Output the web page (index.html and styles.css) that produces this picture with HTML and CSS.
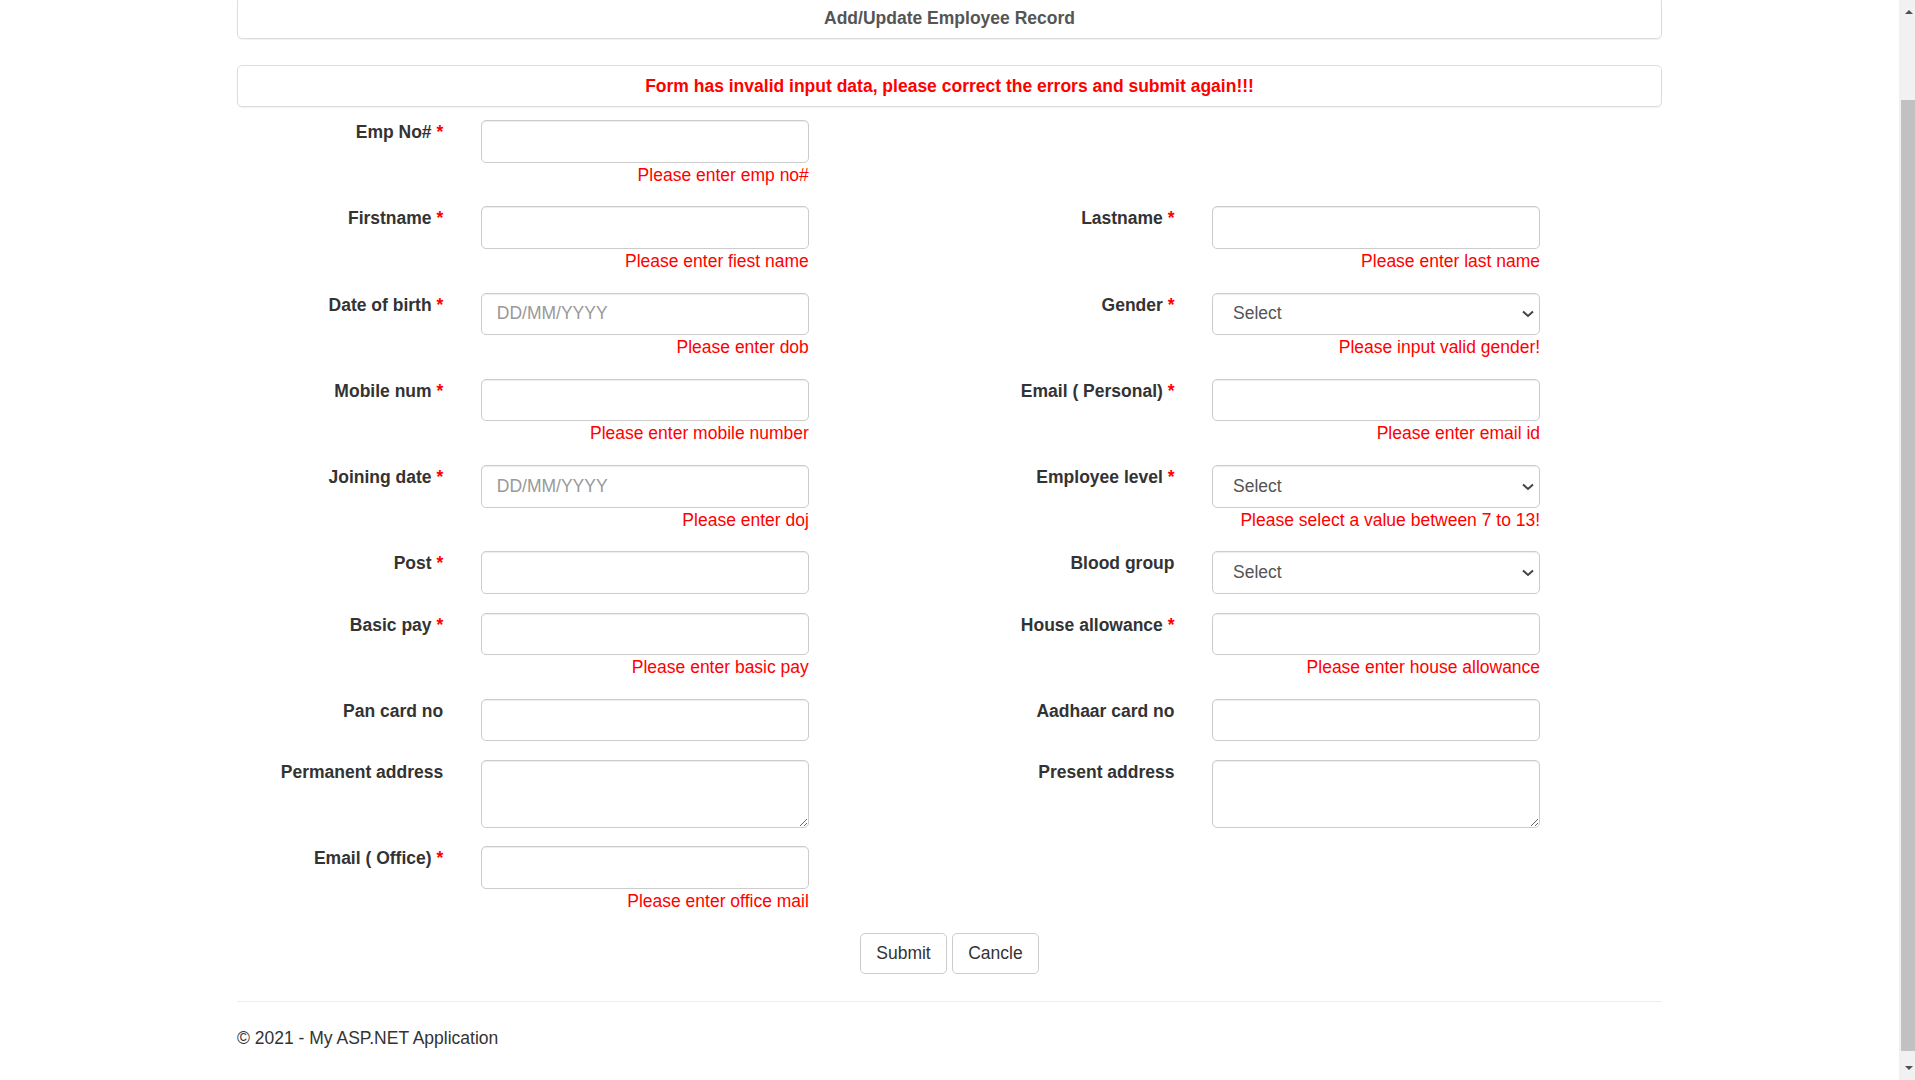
FILE: index.html
```html
<!DOCTYPE html>
<html lang="en">
<head>
<meta charset="utf-8">
<title>Add/Update Employee Record</title>
<link rel="stylesheet" href="styles.css">
</head>
<body>
<div class="page">
  <div class="container">
    <div class="panel panel-title">Add/Update Employee Record</div>
    <div class="panel panel-alert">Form has invalid input data, please correct the errors and submit again!!!</div>

    <form class="form-grid">
      <div class="field">
        <label class="lbl">Emp No# <span class="req">*</span></label>
        <div class="ctl"><input class="inp" type="text"><span class="err">Please enter emp no#</span></div>
      </div>
      <div class="field"></div>

      <div class="field">
        <label class="lbl">Firstname <span class="req">*</span></label>
        <div class="ctl"><input class="inp" type="text"><span class="err">Please enter fiest name</span></div>
      </div>
      <div class="field">
        <label class="lbl">Lastname <span class="req">*</span></label>
        <div class="ctl"><input class="inp" type="text"><span class="err">Please enter last name</span></div>
      </div>

      <div class="field">
        <label class="lbl">Date of birth <span class="req">*</span></label>
        <div class="ctl"><input class="inp" type="text" placeholder="DD/MM/YYYY"><span class="err">Please enter dob</span></div>
      </div>
      <div class="field">
        <label class="lbl">Gender <span class="req">*</span></label>
        <div class="ctl"><div class="sel-wrap"><select class="inp sel"><option>Select</option></select><svg class="chev" width="12" height="8" viewBox="0 0 12 8"><path d="M1 1.5 L6 6 L11 1.5" fill="none" stroke="#444" stroke-width="2"/></svg></div><span class="err">Please input valid gender!</span></div>
      </div>

      <div class="field">
        <label class="lbl">Mobile num <span class="req">*</span></label>
        <div class="ctl"><input class="inp" type="text"><span class="err">Please enter mobile number</span></div>
      </div>
      <div class="field">
        <label class="lbl">Email ( Personal) <span class="req">*</span></label>
        <div class="ctl"><input class="inp" type="text"><span class="err">Please enter email id</span></div>
      </div>

      <div class="field">
        <label class="lbl">Joining date <span class="req">*</span></label>
        <div class="ctl"><input class="inp" type="text" placeholder="DD/MM/YYYY"><span class="err">Please enter doj</span></div>
      </div>
      <div class="field">
        <label class="lbl">Employee level <span class="req">*</span></label>
        <div class="ctl"><div class="sel-wrap"><select class="inp sel"><option>Select</option></select><svg class="chev" width="12" height="8" viewBox="0 0 12 8"><path d="M1 1.5 L6 6 L11 1.5" fill="none" stroke="#444" stroke-width="2"/></svg></div><span class="err">Please select a value between 7 to 13!</span></div>
      </div>

      <div class="field">
        <label class="lbl">Post <span class="req">*</span></label>
        <div class="ctl"><input class="inp" type="text"></div>
      </div>
      <div class="field">
        <label class="lbl">Blood group</label>
        <div class="ctl"><div class="sel-wrap"><select class="inp sel"><option>Select</option></select><svg class="chev" width="12" height="8" viewBox="0 0 12 8"><path d="M1 1.5 L6 6 L11 1.5" fill="none" stroke="#444" stroke-width="2"/></svg></div></div>
      </div>

      <div class="field">
        <label class="lbl">Basic pay <span class="req">*</span></label>
        <div class="ctl"><input class="inp" type="text"><span class="err">Please enter basic pay</span></div>
      </div>
      <div class="field">
        <label class="lbl">House allowance <span class="req">*</span></label>
        <div class="ctl"><input class="inp" type="text"><span class="err">Please enter house allowance</span></div>
      </div>

      <div class="field">
        <label class="lbl">Pan card no</label>
        <div class="ctl"><input class="inp" type="text"></div>
      </div>
      <div class="field">
        <label class="lbl">Aadhaar card no</label>
        <div class="ctl"><input class="inp" type="text"></div>
      </div>

      <div class="field">
        <label class="lbl">Permanent address</label>
        <div class="ctl"><textarea class="inp ta" rows="2"></textarea></div>
      </div>
      <div class="field">
        <label class="lbl">Present address</label>
        <div class="ctl"><textarea class="inp ta" rows="2"></textarea></div>
      </div>

      <div class="field">
        <label class="lbl">Email ( Office) <span class="req">*</span></label>
        <div class="ctl"><input class="inp" type="text"><span class="err">Please enter office mail</span></div>
      </div>
      <div class="field"></div>
    </form>

    <div class="actions">
      <button class="btn" type="button">Submit</button>
      <button class="btn" type="button">Cancle</button>
    </div>

    <hr class="rule">
    <footer class="footer">&copy; 2021 - My ASP.NET Application</footer>
  </div>
</div>

<div class="scrollbar">
  <div class="sb-up"></div>
  <div class="sb-thumb"></div>
  <div class="sb-down"></div>
</div>
</body>
</html>
```
FILE: styles.css
```css
html, body {
  margin: 0;
  padding: 0;
  overflow: hidden;
  background: #fff;
}
body {
  font-family: "Liberation Sans", Arial, Helvetica, sans-serif;
  font-size: 17.5px;
  line-height: 25px;
  color: #333;
}
.page {
  width: 1899px;
}
.container {
  width: 1425px;
  margin: 0 auto;
}
.panel {
  border: 1px solid #ddd;
  border-radius: 5px;
  box-shadow: 0 1px 1px rgba(0,0,0,0.06);
  padding: 7.5px 15px;
  text-align: center;
  font-weight: bold;
  height: 25px;
}
.panel-title {
  margin-top: -3px;
  margin-bottom: 26px;
  color: #555;
}
.panel-alert {
  color: #ff0000;
  margin-bottom: 13px;
}
.form-grid {
  display: grid;
  grid-template-columns: 693.75px 693.75px;
  column-gap: 37.5px;
  margin: 0;
}
.field {
  display: flex;
  column-gap: 37.5px;
  margin-bottom: 18.75px;
  align-items: flex-start;
}
.lbl {
  flex: 0 0 206.25px;
  text-align: right;
  font-weight: bold;
  line-height: 25px;
  padding-top: 0;
}
.req {
  color: #ff0000;
  font-weight: bold;
}
.ctl {
  flex: 0 0 328.1px;
  display: flex;
  flex-direction: column;
}
.inp {
  display: block;
  box-sizing: border-box;
  width: 328.1px;
  height: 42.5px;
  margin: 0;
  padding: 7.5px 15px;
  font-family: inherit;
  font-size: 17.5px;
  line-height: 25px;
  color: #555;
  background: #fff;
  border: 1px solid #ccc;
  border-radius: 5px;
  box-shadow: inset 0 1px 1px rgba(0,0,0,0.075);
  outline: none;
}
.inp::placeholder {
  color: #999;
}
.sel-wrap {
  position: relative;
}
.sel {
  appearance: none;
  -webkit-appearance: none;
  padding-left: 20px;
}
.chev {
  position: absolute;
  right: 6px;
  top: 17.5px;
  pointer-events: none;
}
.ta {
  height: 67.5px;
  resize: both;
}
.err {
  display: block;
  text-align: right;
  color: #ff0000;
  line-height: 25px;
}
.actions {
  display: flex;
  justify-content: center;
  gap: 5.5px;
  margin-top: 0.5px;
}
.btn {
  font-family: inherit;
  font-size: 17.5px;
  line-height: 25px;
  color: #333;
  background: #fff;
  border: 1px solid #ccc;
  border-radius: 5px;
  padding: 7px 15px;
  margin: 0;
}
.rule {
  border: 0;
  border-top: 1px solid #eee;
  margin: 26.5px 0 0 0;
  height: 0;
}
.footer {
  margin-top: 24px;
  line-height: 25px;
}
.scrollbar {
  position: fixed;
  top: 0;
  right: 0;
  width: 16px;
  height: 1080px;
  background: #f1f1f1;
}
.sb-thumb {
  position: absolute;
  left: 2px;
  right: 0;
  top: 100px;
  height: 951px;
  background: #c1c1c1;
}
.sb-up, .sb-down {
  position: absolute;
  left: 6px;
  width: 0;
  height: 0;
  border-left: 4.5px solid transparent;
  border-right: 4.5px solid transparent;
}
.sb-up {
  top: 10px;
  border-bottom: 4.5px solid #505050;
}
.sb-down {
  top: 1066px;
  border-top: 4.5px solid #505050;
}
```
